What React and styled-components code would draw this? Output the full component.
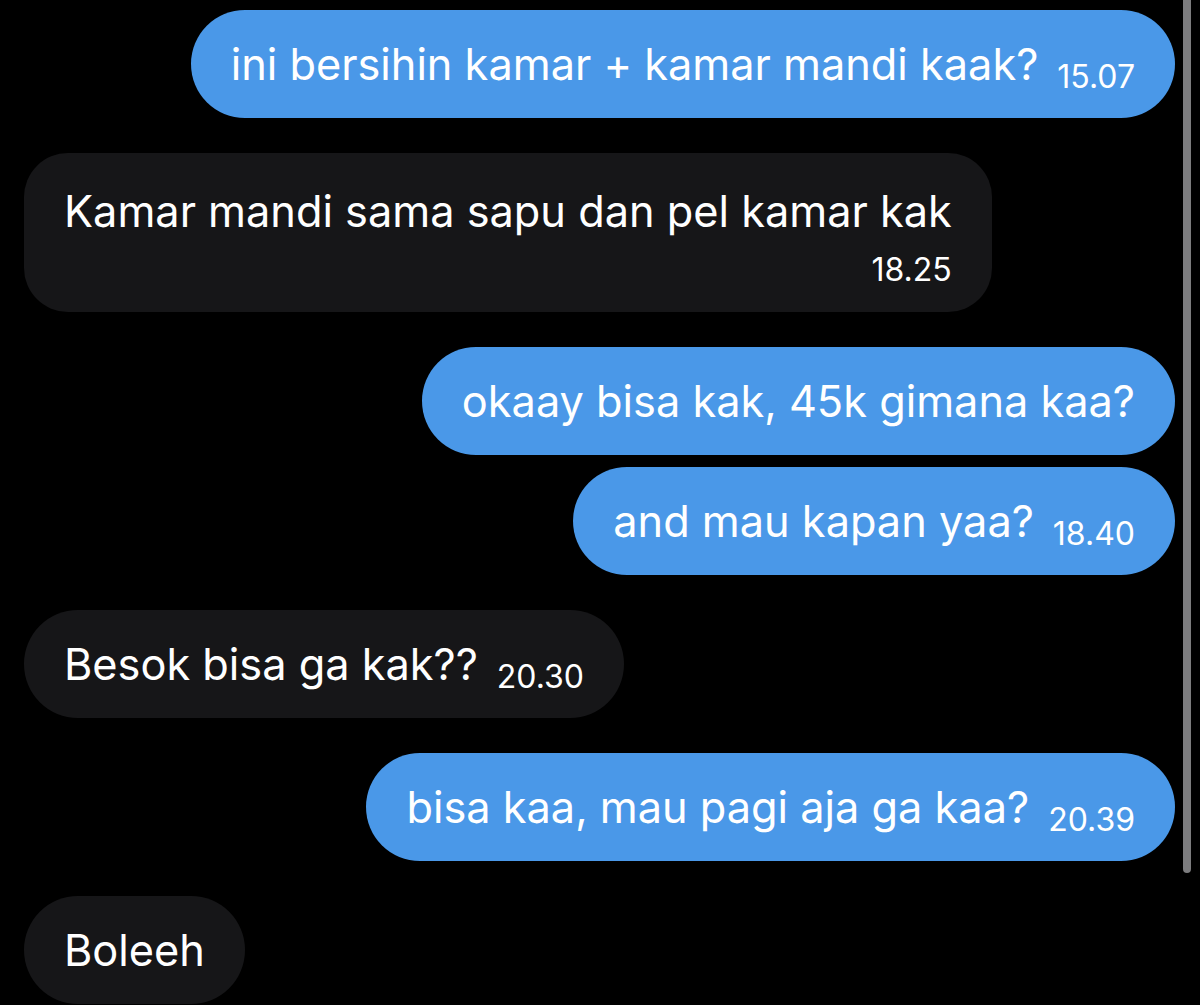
import React from 'react'
import styled, { createGlobalStyle } from 'styled-components'

const GlobalStyle = createGlobalStyle`
  html, body {
    margin: 0;
    padding: 0;
    background: #000;
  }
  body {
    font-family: Inter, "Noto Sans", "Liberation Sans", sans-serif;
    color: #fff;
    overflow: hidden;
  }
`

const messages = [
  { id: 1, mine: true, text: 'ini bersihin kamar + kamar mandi kaak?', time: '15.07' },
  { id: 2, mine: false, text: 'Kamar mandi sama sapu dan pel kamar kak', time: '18.25', wrapTime: true },
  { id: 3, mine: true, text: 'okaay bisa kak, 45k gimana kaa?' },
  { id: 4, mine: true, text: 'and mau kapan yaa?', time: '18.40', grouped: true },
  { id: 5, mine: false, text: 'Besok bisa ga kak??', time: '20.30' },
  { id: 6, mine: true, text: 'bisa kaa, mau pagi aja ga kaa?', time: '20.39' },
  { id: 7, mine: false, text: 'Boleeh' }
]

const Screen = styled.div`
  position: relative;
  height: 1005px;
  overflow: hidden;
`

const Thread = styled.div`
  display: flex;
  flex-direction: column;
  padding: 10px 25px 0 24px;
`

const Row = styled.div`
  display: flex;
  justify-content: ${(p) => (p.mine ? 'flex-end' : 'flex-start')};
  margin-top: ${(p) => (p.first ? 0 : p.grouped ? '12px' : '35px')};
`

const Bubble = styled.div`
  display: flex;
  flex-direction: ${(p) => (p.wrapTime ? 'column' : 'row')};
  align-items: ${(p) => (p.wrapTime ? 'flex-end' : 'center')};
  box-sizing: border-box;
  min-height: 108px;
  padding: ${(p) => (p.wrapTime ? '31px 40px 26px 40px' : '0 40px')};
  border-radius: ${(p) => (p.wrapTime ? '44px' : '54px')};
  background: ${(p) => (p.mine ? '#4a98e8' : '#161618')};
`

const Line = styled.div`
  display: flex;
  align-items: baseline;
  align-self: ${(p) => (p.stretch ? 'flex-start' : 'auto')};
`

const Text = styled.span`
  font-size: 43.3px;
  line-height: 54px;
  white-space: nowrap;
`

const Time = styled.span`
  font-size: 32px;
  line-height: 1;
  margin-left: 19px;
  position: relative;
  top: 8px;
  white-space: nowrap;
`

const BlockTime = styled.span`
  font-size: 32px;
  line-height: 1;
  margin-top: 16px;
  white-space: nowrap;
`

const ScrollIndicator = styled.div`
  position: absolute;
  top: 0;
  right: 9px;
  width: 8px;
  height: 873px;
  border-radius: 0 0 4px 4px;
  background: #7c7c7e;
`

const Message = ({ msg, first }) => (
  <Row mine={msg.mine} grouped={msg.grouped} first={first}>
    <Bubble mine={msg.mine} wrapTime={msg.wrapTime}>
      {msg.wrapTime ? (
        <>
          <Line stretch>
            <Text>{msg.text}</Text>
          </Line>
          <BlockTime>{msg.time}</BlockTime>
        </>
      ) : (
        <Line>
          <Text>{msg.text}</Text>
          {msg.time && <Time>{msg.time}</Time>}
        </Line>
      )}
    </Bubble>
  </Row>
)

export default function App() {
  return (
    <>
      <GlobalStyle />
      <Screen>
        <Thread>
          {messages.map((m, i) => (
            <Message key={m.id} msg={m} first={i === 0} />
          ))}
        </Thread>
        <ScrollIndicator />
      </Screen>
    </>
  )
}
